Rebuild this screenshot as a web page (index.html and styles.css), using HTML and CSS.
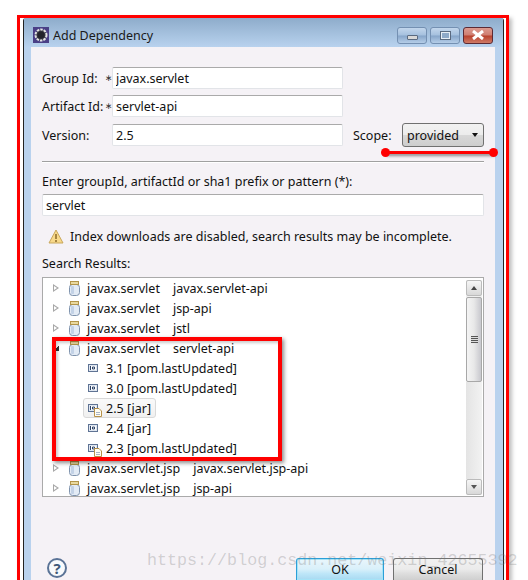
FILE: index.html
```html
<!DOCTYPE html>
<html lang="en">
<head>
    <meta charset="UTF-8">
    <title>Add Dependency</title>
    <link rel="stylesheet" href="styles.css">
</head>
<body>
    <svg class="defs" width="0" height="0">
        <symbol id="jar" viewBox="0 0 13 15">
            <rect x="1.5" y="3.5" width="10" height="11" rx="3" fill="#e3ebf5" stroke="#7f93ad"/>
            <rect x="3" y="5" width="3" height="8" rx="1" fill="#c3d2e6"/>
            <rect x="2.5" y="0.5" width="8" height="3" fill="#e9d9a0" stroke="#b3954a"/>
        </symbol>
        <symbol id="ver" viewBox="0 0 10 8">
            <rect x="0.5" y="0.5" width="9" height="7" fill="#dfe6f0" stroke="#5f7394"/>
            <rect x="2" y="2" width="6" height="4" fill="#fff"/>
            <path d="M2.5 2v4M4.5 3h2v2h-2z" fill="none" stroke="#2f4468"/>
        </symbol>
        <symbol id="doc" viewBox="0 0 8 9">
            <path d="M.5.5h4.5l2.500 2.500v5.500h-7z" fill="#fffdf2" stroke="#b8924a"/>
            <path d="M2 4.500h4M2 6.500h4" stroke="#a9b4c4"/>
        </symbol>
    </svg>

    <div class="frame">
        <div class="window">
            <div class="titlebar">
                <svg class="app-icon" viewBox="0 0 16 16" width="16" height="16">
                    <rect width="16" height="16" fill="#4a3f86"/>
                    <circle cx="8" cy="8" r="5.500" fill="#3a3a44" stroke="#e4e4e4" stroke-width="2" stroke-dasharray="2.500 1"/>
                    <circle cx="8" cy="8" r="3.500" fill="#23232b"/>
                </svg>
                <span class="title">Add Dependency</span>
                <div class="win-buttons">
                    <div class="win-btn"><span class="min-glyph"></span></div>
                    <div class="win-btn"><span class="max-glyph"></span></div>
                    <div class="win-btn close">
                        <svg viewBox="0 0 14 10" width="14" height="10">
                            <path d="M2 1l10 8M12 1l-10 8" stroke="#fff" stroke-width="3" fill="none"/>
                        </svg>
                    </div>
                </div>
            </div>

            <div class="content">
                <div class="form-row">
                    <label class="field-label">Group Id:</label>
                    <span class="star">∗</span>
                    <input class="field" type="text" value="javax.servlet">
                </div>
                <div class="form-row">
                    <label class="field-label">Artifact Id:</label>
                    <span class="star">∗</span>
                    <input class="field" type="text" value="servlet-api">
                </div>
                <div class="form-row version-row">
                    <label class="field-label">Version:</label>
                    <span class="star"></span>
                    <input class="field" type="text" value="2.5">
                    <label class="scope-label">Scope:</label>
                    <div class="combo">provided<span class="combo-arrow"></span></div>
                </div>

                <div class="separator"></div>

                <p class="search-label">Enter groupId, artifactId or sha1 prefix or pattern (*):</p>
                <input class="field search-field" type="text" value="servlet">

                <div class="notice">
                    <svg viewBox="0 0 16 15" width="16" height="15">
                        <path d="M8 1L15 14H1z" fill="#f8d98a" stroke="#c9a75c" stroke-linejoin="round"/>
                        <path d="M8 5v5M8 11v2" stroke="#8a6a28" stroke-width="1.500"/>
                    </svg>
                    <span>Index downloads are disabled, search results may be incomplete.</span>
                </div>

                <p class="results-label">Search Results:</p>

                <div class="tree">
                    <ul class="rows">
                        <li class="row"><span class="arrow"></span><svg class="jar"><use href="#jar"/></svg><span>javax.servlet</span><span class="artifact">javax.servlet-api</span></li>
                        <li class="row"><span class="arrow"></span><svg class="jar"><use href="#jar"/></svg><span>javax.servlet</span><span class="artifact">jsp-api</span></li>
                        <li class="row"><span class="arrow"></span><svg class="jar"><use href="#jar"/></svg><span>javax.servlet</span><span class="artifact">jstl</span></li>
                        <li class="row"><span class="arrow open"></span><svg class="jar"><use href="#jar"/></svg><span>javax.servlet</span><span class="artifact">servlet-api</span></li>
                        <li class="row child"><span class="ver-icon"><svg class="ver"><use href="#ver"/></svg></span><span>3.1 [pom.lastUpdated]</span></li>
                        <li class="row child"><span class="ver-icon"><svg class="ver"><use href="#ver"/></svg></span><span>3.0 [pom.lastUpdated]</span></li>
                        <li class="row child selected"><span class="ver-icon"><svg class="ver"><use href="#ver"/></svg><svg class="doc"><use href="#doc"/></svg></span><span>2.5 [jar]</span></li>
                        <li class="row child"><span class="ver-icon"><svg class="ver"><use href="#ver"/></svg></span><span>2.4 [jar]</span></li>
                        <li class="row child"><span class="ver-icon"><svg class="ver"><use href="#ver"/></svg><svg class="doc"><use href="#doc"/></svg></span><span>2.3 [pom.lastUpdated]</span></li>
                        <li class="row"><span class="arrow"></span><svg class="jar"><use href="#jar"/></svg><span>javax.servlet.jsp</span><span class="artifact">javax.servlet.jsp-api</span></li>
                        <li class="row"><span class="arrow"></span><svg class="jar"><use href="#jar"/></svg><span>javax.servlet.jsp</span><span class="artifact">jsp-api</span></li>
                    </ul>
                    <div class="scrollbar">
                        <div class="sb-btn"><span class="sb-up"></span></div>
                        <div class="sb-thumb"><span class="grip"></span></div>
                        <div class="sb-track"></div>
                        <div class="sb-btn"><span class="sb-down"></span></div>
                    </div>
                </div>

                <div class="footer">
                    <div class="help">?</div>
                    <div class="footer-buttons">
                        <div class="button default">OK</div>
                        <div class="button">Cancel</div>
                    </div>
                </div>
            </div>
        </div>
    </div>

    <!-- annotations drawn over the screenshot -->
    <div class="mark-box"></div>
    <div class="mark-line"></div>
    <div class="watermark">https://blog.csdn.net/weixin_42655392</div>
</body>
</html>
```

FILE: styles.css
```css
html, body {
    margin: 0;
    height: 580px;
    overflow: hidden;
    background: #fff;
}
body {
    position: relative;
    font-family: "Noto Sans", sans-serif;
    font-size: 12.500px;
    color: #111;
}
.defs {
    position: absolute;
}
.frame {
    box-sizing: border-box;
    width: 492px;
    height: 565px;
    margin: 15px 0 0 17px;
    padding: 0 2px 0 3px;
    border: 3px solid #f00;
    border-bottom: 0;
    box-shadow: 3px 3px 4px rgba(0, 0, 0, 0.25);
}
.window {
    height: 100%;
    border-left: 1px solid #222;
    border-right: 1px solid #222;
    border-radius: 3px 3px 0 0;
    background: #b9d2ee;
}
.titlebar {
    box-sizing: border-box;
    display: flex;
    align-items: center;
    height: 29px;
    padding: 5px 10px 0 9px;
    background: linear-gradient(#8eaccb, #b8d2ee);
}
.app-icon {
    flex: none;
}
.title {
    margin-left: 4px;
    color: #1a1a1a;
}
.win-buttons {
    display: flex;
    gap: 3px;
    margin-left: auto;
}
.win-btn {
    box-sizing: border-box;
    display: flex;
    align-items: center;
    justify-content: center;
    width: 30px;
    height: 17px;
    border: 1px solid #7490b2;
    border-radius: 3px;
    background: linear-gradient(#c2d6ec 0, #a5c0de 48%, #86a5c9 52%, #b5cde8 100%);
}
.win-btn.close {
    border-color: #5c2a34;
    background: linear-gradient(#dc9a90 0, #cf7d70 48%, #b8402c 52%, #cf7a66 100%);
}
.min-glyph {
    width: 9px;
    height: 3px;
    margin-top: 5px;
    border: 1px solid #5a6a80;
    background: #d8d8d8;
    border-radius: 1px;
}
.max-glyph {
    box-sizing: border-box;
    width: 11px;
    height: 9px;
    border: 2px solid #e6edf5;
    outline: 1px solid #5a6a80;
    outline-offset: -1px;
    background: #8ea9c8;
}
.content {
    margin: 0 8px 0 7px;
    padding: 20px 11px 0;
    height: 533px;
    box-sizing: border-box;
    overflow: hidden;
    background: #f5f2f6;
}
.form-row {
    display: flex;
    align-items: center;
    margin-bottom: 6px;
    height: 22px;
}
.version-row {
    margin-top: 7px;
    margin-bottom: 0;
}
.field-label {
    flex: none;
    width: 63px;
    white-space: nowrap;
}
.star {
    flex: none;
    width: 7px;
    font-family: "DejaVu Sans", sans-serif;
    font-size: 9px;
    color: #333;
}
.field {
    box-sizing: border-box;
    flex: none;
    width: 231px;
    height: 22px;
    padding: 0 3px;
    border: 1px solid #e2e4e8;
    border-top-color: #aaa;
    border-radius: 2px;
    background: #fff;
    font: inherit;
    color: #111;
    outline: none;
}
.scope-label {
    flex: none;
    margin-left: 10px;
    width: 49px;
}
.combo {
    box-sizing: border-box;
    flex: none;
    display: flex;
    align-items: center;
    justify-content: space-between;
    width: 82px;
    height: 24px;
    padding: 0 5px 0 4px;
    border: 1px solid #707070;
    border-radius: 3px;
    background: linear-gradient(#f2f2f2, #ececec 48%, #d8d8d8 52%, #cdcdcd);
}
.combo-arrow {
    width: 0;
    height: 0;
    border: 3.500px solid transparent;
    border-top: 4px solid #111;
    border-bottom: 0;
}
.separator {
    height: 1px;
    margin-top: 15px;
    background: #a0a0a0;
    box-shadow: 0 1px 0 #fff;
}
.search-label {
    margin: 12px 0 5px;
    line-height: 15px;
}
.search-field {
    display: block;
    width: 100%;
}
.notice {
    display: flex;
    align-items: center;
    gap: 6px;
    margin: 12px 0 0 6px;
    height: 16px;
}
.results-label {
    margin: 12px 0 6px;
    line-height: 15px;
}
.tree {
    box-sizing: border-box;
    display: flex;
    height: 220px;
    border: 1px solid #aaa;
    background: #fff;
    overflow: hidden;
}
.rows {
    flex: 1;
    min-width: 0;
    margin: 0;
    padding: 0;
    list-style: none;
    white-space: nowrap;
    overflow: hidden;
}
.row {
    display: flex;
    align-items: center;
    height: 20px;
    padding-left: 10px;
}
.row .artifact {
    margin-left: 13px;
}
.arrow {
    flex: none;
    box-sizing: border-box;
    width: 0;
    height: 0;
    border-left: 6px solid #a8a8a8;
    border-top: 4px solid transparent;
    border-bottom: 4px solid transparent;
    position: relative;
}
.arrow::after {
    content: "";
    position: absolute;
    left: -5px;
    top: -2px;
    border-left: 3px solid #fff;
    border-top: 2px solid transparent;
    border-bottom: 2px solid transparent;
}
.arrow.open {
    border: 0;
    width: 6px;
    height: 6px;
    background: linear-gradient(135deg, transparent 50%, #333 50%);
}
.arrow.open::after {
    display: none;
}
.jar {
    flex: none;
    width: 13px;
    height: 15px;
    margin: 0 6px 0 9px;
}
.child {
    padding-left: 45px;
}
.ver-icon {
    flex: none;
    position: relative;
    width: 18px;
    height: 16px;
    display: flex;
    align-items: center;
}
.ver {
    width: 10px;
    height: 8px;
}
.doc {
    position: absolute;
    left: 6px;
    top: 8px;
    width: 8px;
    height: 9px;
}
.selected {
    box-sizing: border-box;
    width: max-content;
    height: 20px;
    margin-left: 40px;
    padding-left: 4px;
    padding-right: 4px;
    border: 1px solid #d9d9d9;
    border-radius: 3px;
    background: linear-gradient(#fafafa, #f0f0f0);
}
.scrollbar {
    flex: none;
    display: flex;
    flex-direction: column;
    width: 16px;
    margin: 2px 1px 1px 0;
    background: #f0f0f0;
}
.sb-btn {
    box-sizing: border-box;
    flex: none;
    display: flex;
    align-items: center;
    justify-content: center;
    height: 16px;
    border: 1px solid #bbb;
    border-radius: 2px;
    background: linear-gradient(#f6f6f6, #d8d8d8);
}
.sb-up {
    border: 3.500px solid transparent;
    border-bottom: 4px solid #444;
    border-top: 0;
}
.sb-down {
    border: 3.500px solid transparent;
    border-top: 4px solid #555;
    border-bottom: 0;
}
.sb-thumb {
    box-sizing: border-box;
    flex: none;
    display: flex;
    align-items: center;
    justify-content: center;
    height: 85px;
    margin-top: 1px;
    border: 1px solid #a8a8a8;
    border-radius: 2px;
    background: linear-gradient(90deg, #f4f4f4, #e8e8e8 50%, #c8c8ce);
}
.grip {
    width: 7px;
    height: 7px;
    background: repeating-linear-gradient(#555 0 1px, #ddd 1px 2px);
}
.sb-track {
    flex: 1;
    background: linear-gradient(90deg, #e4e4e4, #f2f2f2);
}
.footer {
    display: flex;
    align-items: flex-start;
    justify-content: space-between;
    margin-top: 61px;
}
.help {
    box-sizing: border-box;
    width: 20px;
    height: 20px;
    margin-left: 5px;
    border: 2px solid #5a7396;
    border-radius: 50%;
    background: #f8fafc;
    color: #3f5878;
    font-weight: bold;
    font-size: 15px;
    line-height: 16px;
    text-align: center;
}
.footer-buttons {
    display: flex;
    gap: 9px;
    margin-right: 1px;
}
.button {
    box-sizing: border-box;
    width: 90px;
    height: 22px;
    border: 1px solid #707070;
    border-bottom: 0;
    border-radius: 3px 3px 0 0;
    background: linear-gradient(#f2f2f2, #ebebeb 48%, #dddddd 70%, #cfcfcf);
    text-align: center;
    line-height: 21px;
}
.button.default {
    width: 88px;
    border: 1px solid #2b9fd8;
    border-bottom: 0;
    box-shadow: inset 0 0 0 1px #a5e3f7;
    background: linear-gradient(#eaf6fc, #d9f0fa 48%, #bde6f8 70%, #a7d9f1);
}
.mark-box {
    position: absolute;
    left: 52px;
    top: 337px;
    box-sizing: border-box;
    width: 230px;
    height: 124px;
    border: 4px solid #f00;
    box-shadow: 2px 2px 4px rgba(0, 0, 0, 0.45), inset 2px 2px 3px rgba(0, 0, 0, 0.2);
}
.mark-line {
    position: absolute;
    left: 385px;
    top: 151px;
    width: 109px;
    height: 3px;
    background: #f00;
    box-shadow: 1px 2px 3px rgba(0, 0, 0, 0.45);
}
.mark-line::before,
.mark-line::after {
    content: "";
    position: absolute;
    top: -3px;
    width: 9px;
    height: 9px;
    border-radius: 50%;
    background: #f00;
}
.mark-line::before {
    left: -4px;
}
.mark-line::after {
    right: -4px;
}
.watermark {
    position: absolute;
    left: 147px;
    top: 551px;
    font-family: "Liberation Mono", monospace;
    font-size: 16.700px;
    color: rgba(120, 120, 120, 0.3);
    white-space: nowrap;
}
```
